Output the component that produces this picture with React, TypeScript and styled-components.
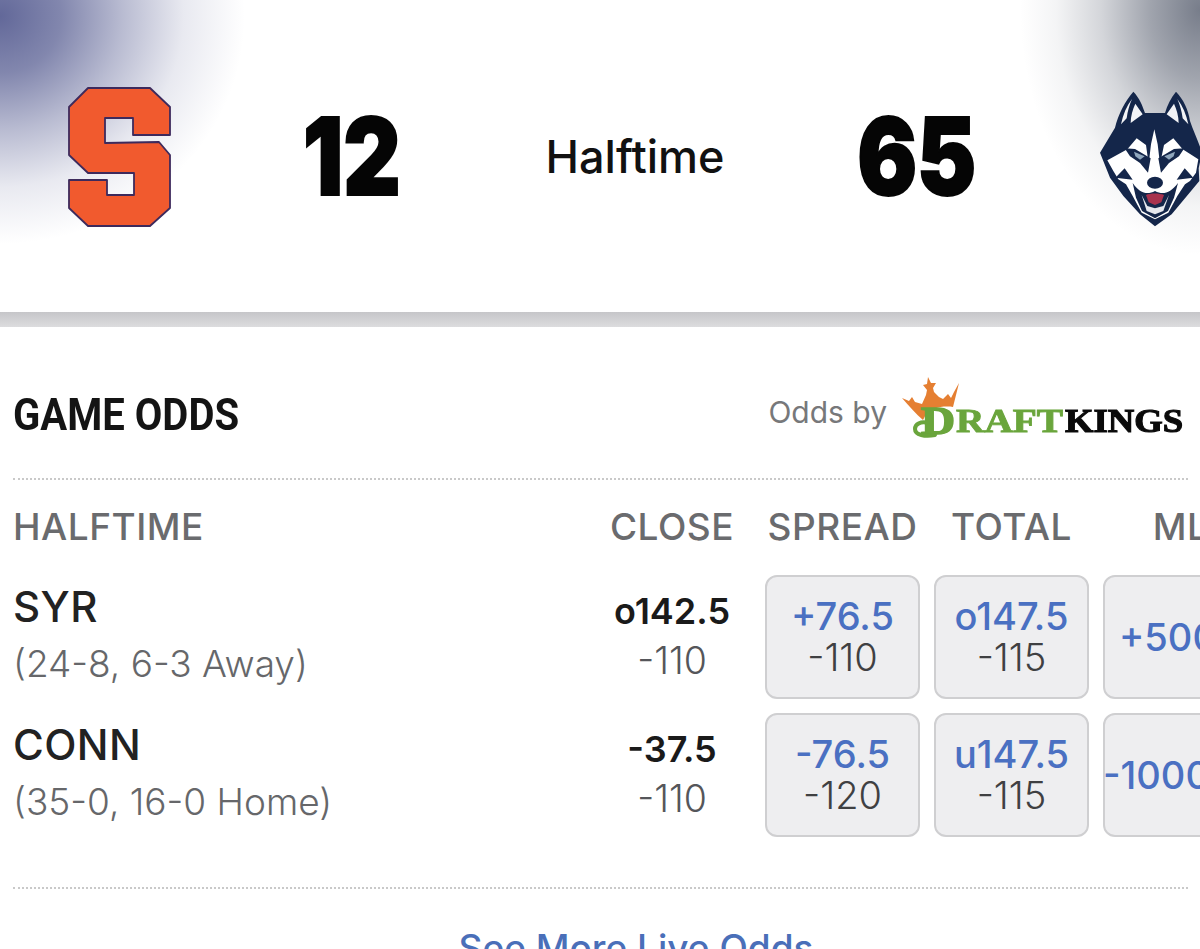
import React from "react";
import styled, { createGlobalStyle } from "styled-components";

const Global = createGlobalStyle`
  html, body { margin: 0; padding: 0; background: #fff; }
  body { font-family: Inter, "Liberation Sans", sans-serif; }
`;

const Page = styled.div`
  width: 1200px;
  height: 949px;
  overflow: hidden;
  background: #fff;
`;

const Scoreboard = styled.header`
  height: 312px;
  display: grid;
  grid-template-columns: 238px 227px 340px 223px 246px;
  width: 1274px;
  align-items: center;
  justify-items: center;
  background:
    radial-gradient(ellipse 245px 228px at 0px 16px, rgba(95, 101, 151, 0.98) 0%, rgba(95, 101, 151, 0.78) 25%, rgba(95, 101, 151, 0.44) 50%, rgba(95, 101, 151, 0.14) 75%, rgba(95, 101, 151, 0) 100%),
    radial-gradient(ellipse 180px 245px at 1200px 10px, rgba(112, 118, 132, 0.95) 0%, rgba(112, 118, 132, 0.66) 28%, rgba(112, 118, 132, 0.3) 55%, rgba(112, 118, 132, 0.08) 80%, rgba(112, 118, 132, 0) 100%),
    #fff;
  background-size: 1200px 312px;
  background-repeat: no-repeat;
`;

const Score = styled.div`
  font-family: Inter, sans-serif;
  font-weight: 900;
  font-size: 107px;
  line-height: 112px;
  color: #050505;
  -webkit-text-stroke: 2px #050505;
  transform: scaleX(0.83);
`;

const Status = styled.div`
  font-family: Inter, sans-serif;
  font-weight: 500;
  font-size: 45px;
  color: #111;
`;

const SLogo = styled.svg`
  width: 104px;
  height: 140px;
  margin: 2px 0 0 2px;
  filter: blur(0.4px);
`;

const HuskyLogo = styled.svg`
  width: 110px;
  height: 150px;
  margin: 0 12px 0 0;
  filter: blur(0.5px);
`;

const Divider = styled.div`
  height: 15px;
  background: linear-gradient(#c6c6c9, #dcdcde);
`;

const Odds = styled.section`
  padding: 0 12px 0 14px;
`;

const TitleRow = styled.div`
  height: 153px;
  display: flex;
  align-items: center;
  justify-content: space-between;
  border-bottom: 2px dotted #c9c9c9;
  box-sizing: border-box;
  margin-left: -1px;
  padding-top: 23px;
`;

const Title = styled.h2`
  margin: 0;
  font-family: Roboto, sans-serif;
  font-weight: 700;
  font-size: 45px;
  color: #141414;
  transform: scaleX(0.89);
  transform-origin: left center;
`;

const Sponsor = styled.div`
  display: flex;
  align-items: center;
  gap: 14px;
  margin-right: 2px;
`;

const SponsorLabel = styled.span`
  font-size: 30px;
  font-weight: 400;
  color: #77787a;
  margin-top: -4px;
`;

const KingsLogo = styled.svg`
  width: 285px;
  height: 66px;
  margin-top: -9px;
  filter: blur(0.35px);
`;

const HeadRow = styled.div`
  display: grid;
  grid-template-columns: 565px 158px 155px 155px 155px;
  column-gap: 14px;
  width: 1300px;
  height: 95px;
  align-items: center;
  padding-bottom: 2px;
  box-sizing: border-box;
`;

const HeadCell = styled.div<{ $left?: boolean }>`
  font-size: 37px;
  letter-spacing: 0.5px;
  font-weight: 500;
  color: #6a6b6e;
  text-align: ${(p) => (p.$left ? "left" : "center")};
  margin-left: ${(p) => (p.$left ? "-1px" : "0")};
`;

const Table = styled.div`
  display: grid;
  grid-template-columns: 565px 158px 155px 155px 155px;
  column-gap: 14px;
  grid-auto-rows: 124px;
  row-gap: 14px;
  width: 1300px;
`;

const Team = styled.div`
  display: flex;
  flex-direction: column;
  justify-content: center;
  gap: 14px;
  margin: -6px 0 0 -1px;
`;

const TeamName = styled.div`
  font-size: 42px;
  line-height: 46px;
  letter-spacing: 0.4px;
  font-weight: 500;
  color: #222;
`;

const Record = styled.div`
  font-size: 37px;
  line-height: 40px;
  font-weight: 300;
  color: #66676a;
`;

const Close = styled.div`
  display: flex;
  flex-direction: column;
  align-items: center;
  justify-content: center;
  gap: 8px;
  margin-top: -3px;
`;

const CloseLine = styled.div`
  font-size: 36px;
  line-height: 41px;
  font-weight: 600;
  color: #1a1a1a;
`;

const CloseOdds = styled.div`
  font-size: 37.5px;
  line-height: 41px;
  font-weight: 300;
  color: #55565a;
`;

const Bet = styled.div`
  box-sizing: border-box;
  width: 155px;
  height: 124px;
  border: 2px solid #cfcfd1;
  border-radius: 12px;
  background: #eeeef0;
  display: flex;
  flex-direction: column;
  align-items: center;
  justify-content: center;
  white-space: nowrap;
`;

const BetLine = styled.div<{ $inset?: number }>`
  font-size: 38px;
  line-height: 41px;
  font-weight: 500;
  color: #4a70c2;
  ${(p) => (p.$inset !== undefined ? `align-self: flex-start; margin-left: ${p.$inset}px;` : "")}
`;

const BetOdds = styled.div`
  font-size: 38px;
  line-height: 41px;
  font-weight: 300;
  color: #3f4042;
`;

const BottomRule = styled.div`
  margin: 50px 0 0 -1px;
  border-top: 2px dotted #c9c9c9;
`;

const More = styled.a`
  display: block;
  text-align: center;
  margin: 37px 0 0 70px;
  font-size: 37px;
  line-height: 44px;
  font-weight: 500;
  color: #4a6fb9;
`;

const Syracuse = () => (
  <SLogo viewBox="68 87 104 140">
    <path
      d="M88 88 L150 88 L170 107 L170 135 L133 135 L133 118 L105 118 L105 143 L159 142 L170 155 L170 208 L150 226 L88 226 L69 208 L69 180 L107 180 L107 195 L134 195 L134 173 L88 173 L69 155 L69 107 Z"
      fill="#f15a2e"
      stroke="#3d2a5c"
      strokeWidth="1.8"
      strokeLinejoin="round"
    />
  </SLogo>
);

const Husky = () => (
  <HuskyLogo viewBox="0 0 330 450">
    <path
      d="M130 32 C148 50 158 75 165 96 L225 96 C232 72 243 50 258 32 C280 55 295 85 300 120 C310 150 325 180 336 215 L326 262 L328 300 L295 340 L245 400 L195 436 L150 400 L100 345 L60 290 L30 215 L75 140 C85 100 105 60 130 32 Z"
      fill="#14264a"
    />
    <path d="M126 54 C110 75 99 100 93 130 L110 112 C113 90 118 72 126 54 Z M136 68 L158 100 L122 126 C122 105 128 86 136 68 Z" fill="#f2f3f6" />
    <path d="M262 54 C278 75 289 100 295 130 L278 112 C275 90 270 72 262 54 Z M252 68 L230 100 L266 126 C266 105 260 86 252 68 Z" fill="#f2f3f6" />
    <path
      d="M52 238 L112 205 L140 172 L168 192 L176 250 L183 190 L193 145 L203 190 L210 250 L222 192 L250 172 L278 205 L325 235 L318 275 L300 300 L285 310 L262 345 L235 395 L195 415 L155 395 L128 345 L108 310 L85 295 L70 270 Z"
      fill="#fff"
    />
    <path d="M104 202 L135 204 L182 232 L174 275 L150 246 L120 226 Z" fill="#14264a" />
    <path d="M283 202 L252 204 L205 232 L213 275 L237 246 L267 226 Z" fill="#14264a" />
    <path d="M132 212 L164 226 L150 236 L136 226 Z" fill="#8fa6bc" />
    <path d="M255 212 L223 226 L237 236 L251 226 Z" fill="#8fa6bc" />
    <path d="M76 290 L128 296 L104 262 Z M310 290 L260 296 L284 262 Z" fill="#14264a" />
    <ellipse cx="195" cy="305" rx="24" ry="18" fill="#14264a" />
    <path d="M128 306 C150 338 172 342 195 330 C218 342 240 338 264 306 L252 350 L234 390 L195 412 L156 390 L138 350 Z" fill="#14264a" />
    <path d="M155 342 L170 390 L195 400 L220 390 L237 342 L220 375 L195 382 L172 375 Z" fill="#e6e8ee" />
    <path d="M168 342 C180 336 208 336 222 342 L214 364 L195 372 L176 364 Z" fill="#a8324e" />
  </HuskyLogo>
);

const DraftKings = () => (
  <KingsLogo viewBox="0 0 285 66">
    <path
      d="M1 21 L8 24 L11 20 L14 25 L21 27 L25 18 L26 13 L22 8 L26 7 L27 0 L30 6 L35 6 L32 11 L33 15 L38 20 L42 22 L47 17 L50 21 L53 15 L58 6 L52 30 C44 29 28 29 22 43 C15 37 8 29 1 21 Z"
      fill="#e57f32"
    />
    <g fontFamily="'Liberation Serif', serif" fontWeight="700">
      <text x="20" y="57" fontSize="39" fill="#6aa53c" stroke="#6aa53c" strokeWidth="1.6" textLength="34" lengthAdjust="spacingAndGlyphs">D</text>
      <text x="55" y="55" fontSize="33" fill="#6aa53c" stroke="#6aa53c" strokeWidth="0.9" textLength="107" lengthAdjust="spacingAndGlyphs">RAFT</text>
      <text x="164" y="55" fontSize="33" fill="#0a0a0a" stroke="#0a0a0a" strokeWidth="1.1" textLength="118" lengthAdjust="spacingAndGlyphs">KINGS</text>
    </g>
    <path d="M27 46 C20 44 14 47 14 52 C14 58 24 60 34 58" fill="none" stroke="#6aa53c" strokeWidth="4" strokeLinecap="round" />
  </KingsLogo>
);

type Row = {
  team: string;
  record: string;
  close: string;
  closeOdds: string;
  spread: string;
  spreadOdds: string;
  total: string;
  totalOdds: string;
  ml: string;
  mlInset: number;
};

const rows: Row[] = [
  { team: "SYR", record: "(24-8, 6-3 Away)", close: "o142.5", closeOdds: "-110", spread: "+76.5", spreadOdds: "-110", total: "o147.5", totalOdds: "-115", ml: "+5000", mlInset: 14 },
  { team: "CONN", record: "(35-0, 16-0 Home)", close: "-37.5", closeOdds: "-110", spread: "-76.5", spreadOdds: "-120", total: "u147.5", totalOdds: "-115", ml: "-10000", mlInset: -2 },
];

export default function App() {
  return (
    <Page>
      <Global />
      <Scoreboard>
        <Syracuse />
        <Score>12</Score>
        <Status>Halftime</Status>
        <Score>65</Score>
        <Husky />
      </Scoreboard>
      <Divider />
      <Odds>
        <TitleRow>
          <Title>GAME ODDS</Title>
          <Sponsor>
            <SponsorLabel>Odds by</SponsorLabel>
            <DraftKings />
          </Sponsor>
        </TitleRow>
        <HeadRow>
          <HeadCell $left>HALFTIME</HeadCell>
          <HeadCell>CLOSE</HeadCell>
          <HeadCell>SPREAD</HeadCell>
          <HeadCell>TOTAL</HeadCell>
          <HeadCell>ML</HeadCell>
        </HeadRow>
        <Table>
          {rows.map((r) => (
            <React.Fragment key={r.team}>
              <Team>
                <TeamName>{r.team}</TeamName>
                <Record>{r.record}</Record>
              </Team>
              <Close>
                <CloseLine>{r.close}</CloseLine>
                <CloseOdds>{r.closeOdds}</CloseOdds>
              </Close>
              <Bet>
                <BetLine>{r.spread}</BetLine>
                <BetOdds>{r.spreadOdds}</BetOdds>
              </Bet>
              <Bet>
                <BetLine>{r.total}</BetLine>
                <BetOdds>{r.totalOdds}</BetOdds>
              </Bet>
              <Bet>
                <BetLine $inset={r.mlInset}>{r.ml}</BetLine>
              </Bet>
            </React.Fragment>
          ))}
        </Table>
        <BottomRule />
        <More>See More Live Odds</More>
      </Odds>
    </Page>
  );
}
